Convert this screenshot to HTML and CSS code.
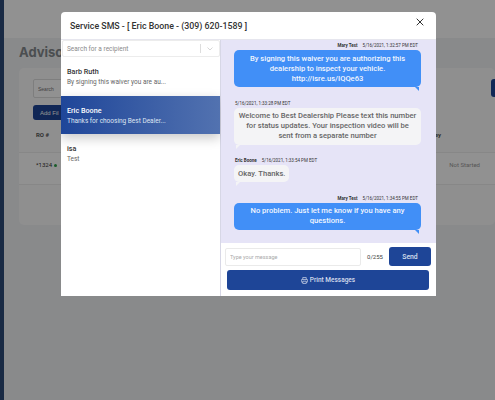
FILE: index.html
```html
<!DOCTYPE html>
<html lang="en">
<head>
  <meta charset="UTF-8" />
  <title>Service SMS</title>
  <link rel="stylesheet" href="styles.css">
</head>
<body>

<div class="page">
  <div class="sidebar"></div>
  <div class="content">
    <div class="topbar"></div>
    <h1>Advisor</h1>
    <div class="panel">
      <input class="panel-search" type="text" placeholder="Search" />
      <div class="panel-actions">
        <button class="add-btn">Add Fil</button>
        <span class="corner-btn"></span>
      </div>
      <div class="table-head">
        <span>RO #</span>
        <span class="col-right">Survey</span>
      </div>
      <div class="table-row">
        <span>*1324 <i class="dot"></i></span>
        <span class="col-status">Not Started</span>
      </div>
    </div>
  </div>
</div>

<div class="overlay"></div>

<div class="modal">
  <div class="modal-head">
    <span class="modal-title">Service SMS - [ Eric Boone - (309) 620-1589 ]</span>
    <svg class="close" width="8" height="8" viewBox="0 0 8 8">
      <path d="M0.7 0.7 L7.3 7.3 M7.3 0.7 L0.7 7.3" stroke="#333" stroke-width="1" fill="none" />
    </svg>
  </div>
  <div class="modal-body">
    <div class="recipients">
      <div class="picker">
        <span class="picker-text">Search for a recipient</span>
        <span class="picker-sep"></span>
        <svg width="6" height="4" viewBox="0 0 6 4">
          <path d="M0.5 0.5 L3 3 L5.5 0.5" stroke="#ccc" stroke-width="0.8" fill="none" />
        </svg>
      </div>
      <div class="person first">
        <strong>Barb Ruth</strong>
        <span>By signing this waiver you are au...</span>
      </div>
      <div class="person active">
        <strong>Eric Boone</strong>
        <span>Thanks for choosing Best Dealer...</span>
      </div>
      <div class="person">
        <strong>isa</strong>
        <span>Test</span>
      </div>
    </div>
    <div class="thread">
      <div class="messages">
        <div class="meta meta-out"><b>Mary Test</b><span>5/16/2021, 1:32:57 PM EDT</span></div>
        <div class="bubble out">By signing this waiver you are authorizing this dealership to inspect your vehicle. http://isre.us/IQQe63</div>

        <div class="meta meta-in"><span>5/16/2021, 1:33:28 PM EDT</span></div>
        <div class="bubble in">Welcome to Best Dealership Please text this number for status updates. Your inspection video will be sent from a separate number</div>

        <div class="meta meta-in"><b>Eric Boone</b><span>5/16/2021, 1:33:54 PM EDT</span></div>
        <div class="bubble in short">Okay. Thanks.</div>

        <div class="meta meta-out"><b>Mary Test</b><span>5/16/2021, 1:34:55 PM EDT</span></div>
        <div class="bubble out">No problem. Just let me know if you have any questions.</div>
      </div>
      <div class="composer">
        <div class="composer-row">
          <input class="msg-input" type="text" placeholder="Type your message" />
          <span class="count">0/255</span>
          <button class="send">Send</button>
        </div>
        <button class="print">
          <svg width="7" height="7" viewBox="0 0 10 10">
            <path d="M2.5 3.5 V0.8 H7.5 V3.5 M2.5 7.5 H1 C0.7 7.5 0.5 7.3 0.5 7 V4.2 C0.5 3.8 0.8 3.5 1.2 3.5 H8.8 C9.2 3.5 9.5 3.8 9.5 4.2 V7 C9.5 7.3 9.3 7.5 9 7.5 H7.5 M2.5 6 H7.5 V9.2 H2.5 Z" stroke="#d5dcec" stroke-width="1" fill="none" />
          </svg>
          Print Messages
        </button>
      </div>
    </div>
  </div>
</div>

</body>
</html>
```

FILE: styles.css
```css
html, body {
  margin: 0;
  height: 100%;
  overflow: hidden;
  font-family: 'Roboto', sans-serif;
}
.page {
  display: flex;
  height: 400px;
  background: #f1f3f5;
}
.sidebar {
  width: 4px;
  background: #2c4a78;
}
.content {
  flex: 1;
  min-width: 0;
}
.topbar {
  height: 38px;
  background: #fff;
  margin-bottom: 6px;
}
h1 {
  margin: 0 0 8px 15px;
  font-family: 'Inter', sans-serif;
  font-size: 13px;
  line-height: 16px;
  font-weight: 700;
  color: #858a8e;
}
.panel {
  margin-left: 15px;
  height: 157px;
  background: #fbfbfc;
  border-radius: 5px;
  padding-top: 11px;
  box-sizing: border-box;
}
.panel-search {
  display: block;
  margin-left: 14px;
  width: 80px;
  height: 19px;
  box-sizing: border-box;
  padding: 0 4px;
  font-size: 5px;
  border: 1px solid #ddd;
  border-radius: 2px;
}
.panel-actions {
  display: flex;
  justify-content: space-between;
  margin-top: 7px;
  height: 15px;
}
.add-btn {
  margin-left: 14px;
  height: 15px;
  width: 32px;
  padding: 0 0 0 7px;
  border: none;
  border-radius: 3px;
  background: #1e4597;
  color: #fff;
  font-size: 6px;
  font-weight: 500;
  text-align: left;
  white-space: nowrap;
}
.corner-btn {
  width: 4px;
  height: 18px;
  margin-top: -26px;
  background: #1e4597;
  border-radius: 3px 0 0 3px;
}
.table-head {
  display: flex;
  justify-content: space-between;
  margin-top: 11px;
  padding: 0 17px;
  height: 21px;
  font-size: 6px;
  line-height: 8px;
  font-weight: 700;
  color: #555;
}
.table-head .col-right {
  margin-right: 37px;
}
.table-row {
  display: flex;
  justify-content: space-between;
  padding: 8px 15px 0 17px;
  height: 33px;
  box-sizing: border-box;
  border-top: 1px solid #eee;
  border-bottom: 1px solid #eee;
  font-size: 6px;
  line-height: 8px;
  color: #333;
  background: #fff;
}
.col-status {
  color: #999;
}
.dot {
  display: inline-block;
  width: 3px;
  height: 3px;
  border-radius: 50%;
  background: #2ea24a;
}
.overlay {
  position: absolute;
  inset: 0;
  background: rgba(0, 0, 0, 0.43);
}
.modal {
  position: absolute;
  left: 61px;
  top: 12px;
  width: 375px;
  height: 284px;
  display: flex;
  flex-direction: column;
  background: #fff;
  border-radius: 4px 4px 0 0;
  overflow: hidden;
}
.modal-head {
  height: 27px;
  flex-shrink: 0;
  display: flex;
  align-items: center;
  justify-content: space-between;
  padding: 0 12px 0 9px;
}
.modal-title {
  font-size: 8.8px;
  font-weight: 500;
  color: #333;
}
.close {
  margin-top: -7px;
}
.modal-body {
  flex: 1;
  display: flex;
  min-height: 0;
  border-top: 1px solid #e6e6ee;
}
.recipients {
  width: 159px;
  flex-shrink: 0;
  border-right: 1px solid #d7d7e6;
}
.picker {
  height: 17px;
  margin: 0 0 0 1px;
  padding: 0 6px 0 4px;
  display: flex;
  align-items: center;
  border: 1px solid #ececec;
  border-radius: 2px;
  box-sizing: border-box;
}
.picker-text {
  flex: 1;
  font-size: 6.5px;
  color: #8a8a8a;
}
.picker-sep {
  width: 1px;
  height: 9px;
  background: #ddd;
  margin-right: 6px;
}
.person {
  display: flex;
  flex-direction: column;
  gap: 1px;
  height: 38px;
  padding: 11px 6px 0;
  box-sizing: border-box;
  font-size: 6.5px;
  line-height: 8.5px;
  color: #666;
}
.person strong {
  font-size: 7.2px;
  font-weight: 500;
  color: #333;
}
.person.first {
  height: 39px;
}
.person.active {
  background: linear-gradient(90deg, #1f4699, #5272b0);
  color: #dfe5f2;
  box-shadow: 0 4px 12px rgba(0, 0, 0, 0.22);
}
.person.active strong {
  color: #fff;
}
.thread {
  flex: 1;
  min-width: 0;
  display: flex;
  flex-direction: column;
}
.messages {
  flex: 1;
  background: #e6e4f7;
  padding: 2px 15px 0 13px;
  min-height: 0;
}
.meta {
  display: flex;
  gap: 5px;
  height: 8px;
  font-size: 4.5px;
  line-height: 8px;
  color: #333;
}
.meta b {
  font-weight: 700;
}
.meta-out {
  justify-content: flex-end;
  padding-right: 3px;
}
.meta-in {
  padding-left: 1px;
}
.bubble {
  position: relative;
  box-sizing: border-box;
  font-size: 7.6px;
  line-height: 10px;
  text-align: center;
  font-weight: 500;
  border-radius: 5px;
  padding: 3.5px 4px;
  margin-bottom: 12.5px;
}
.bubble::after {
  content: "";
  position: absolute;
  bottom: -4px;
  border-top: 4px solid;
}
.out {
  background: #418ff7;
  color: #f2f6fe;
}
.out::after {
  right: 2px;
  color: #418ff7;
  border-left: 4px solid transparent;
}
.in {
  background: #f4f4f6;
  color: #666;
}
.in::after {
  left: 2px;
  color: #f4f4f6;
  border-right: 4px solid transparent;
}
.short {
  width: fit-content;
}
.composer {
  height: 53px;
  flex-shrink: 0;
  padding: 4px 5px 0 4px;
  box-sizing: border-box;
}
.composer-row {
  display: flex;
  align-items: center;
  height: 19px;
}
.msg-input {
  width: 136px;
  height: 18px;
  flex-shrink: 0;
  box-sizing: border-box;
  padding: 0 4px;
  font-size: 5.5px;
  font-family: inherit;
  border: 1px solid #eaeaea;
  border-radius: 2px;
}
.msg-input::placeholder {
  color: #aaa;
}
.count {
  flex: 1;
  text-align: center;
  font-size: 6px;
  color: #444;
}
.send {
  width: 42px;
  height: 19px;
  padding: 0;
  border: none;
  border-radius: 3px;
  background: #1e4597;
  color: #d9e0f0;
  font-family: inherit;
  font-size: 6.8px;
  font-weight: 500;
}
.print {
  display: flex;
  align-items: center;
  justify-content: center;
  gap: 2px;
  width: 202px;
  height: 20px;
  margin: 4px 0 0 2px;
  padding: 0;
  border: none;
  border-radius: 3px;
  background: #1e4597;
  color: #d5dcec;
  font-family: inherit;
  font-size: 6.5px;
  font-weight: 500;
}
```
